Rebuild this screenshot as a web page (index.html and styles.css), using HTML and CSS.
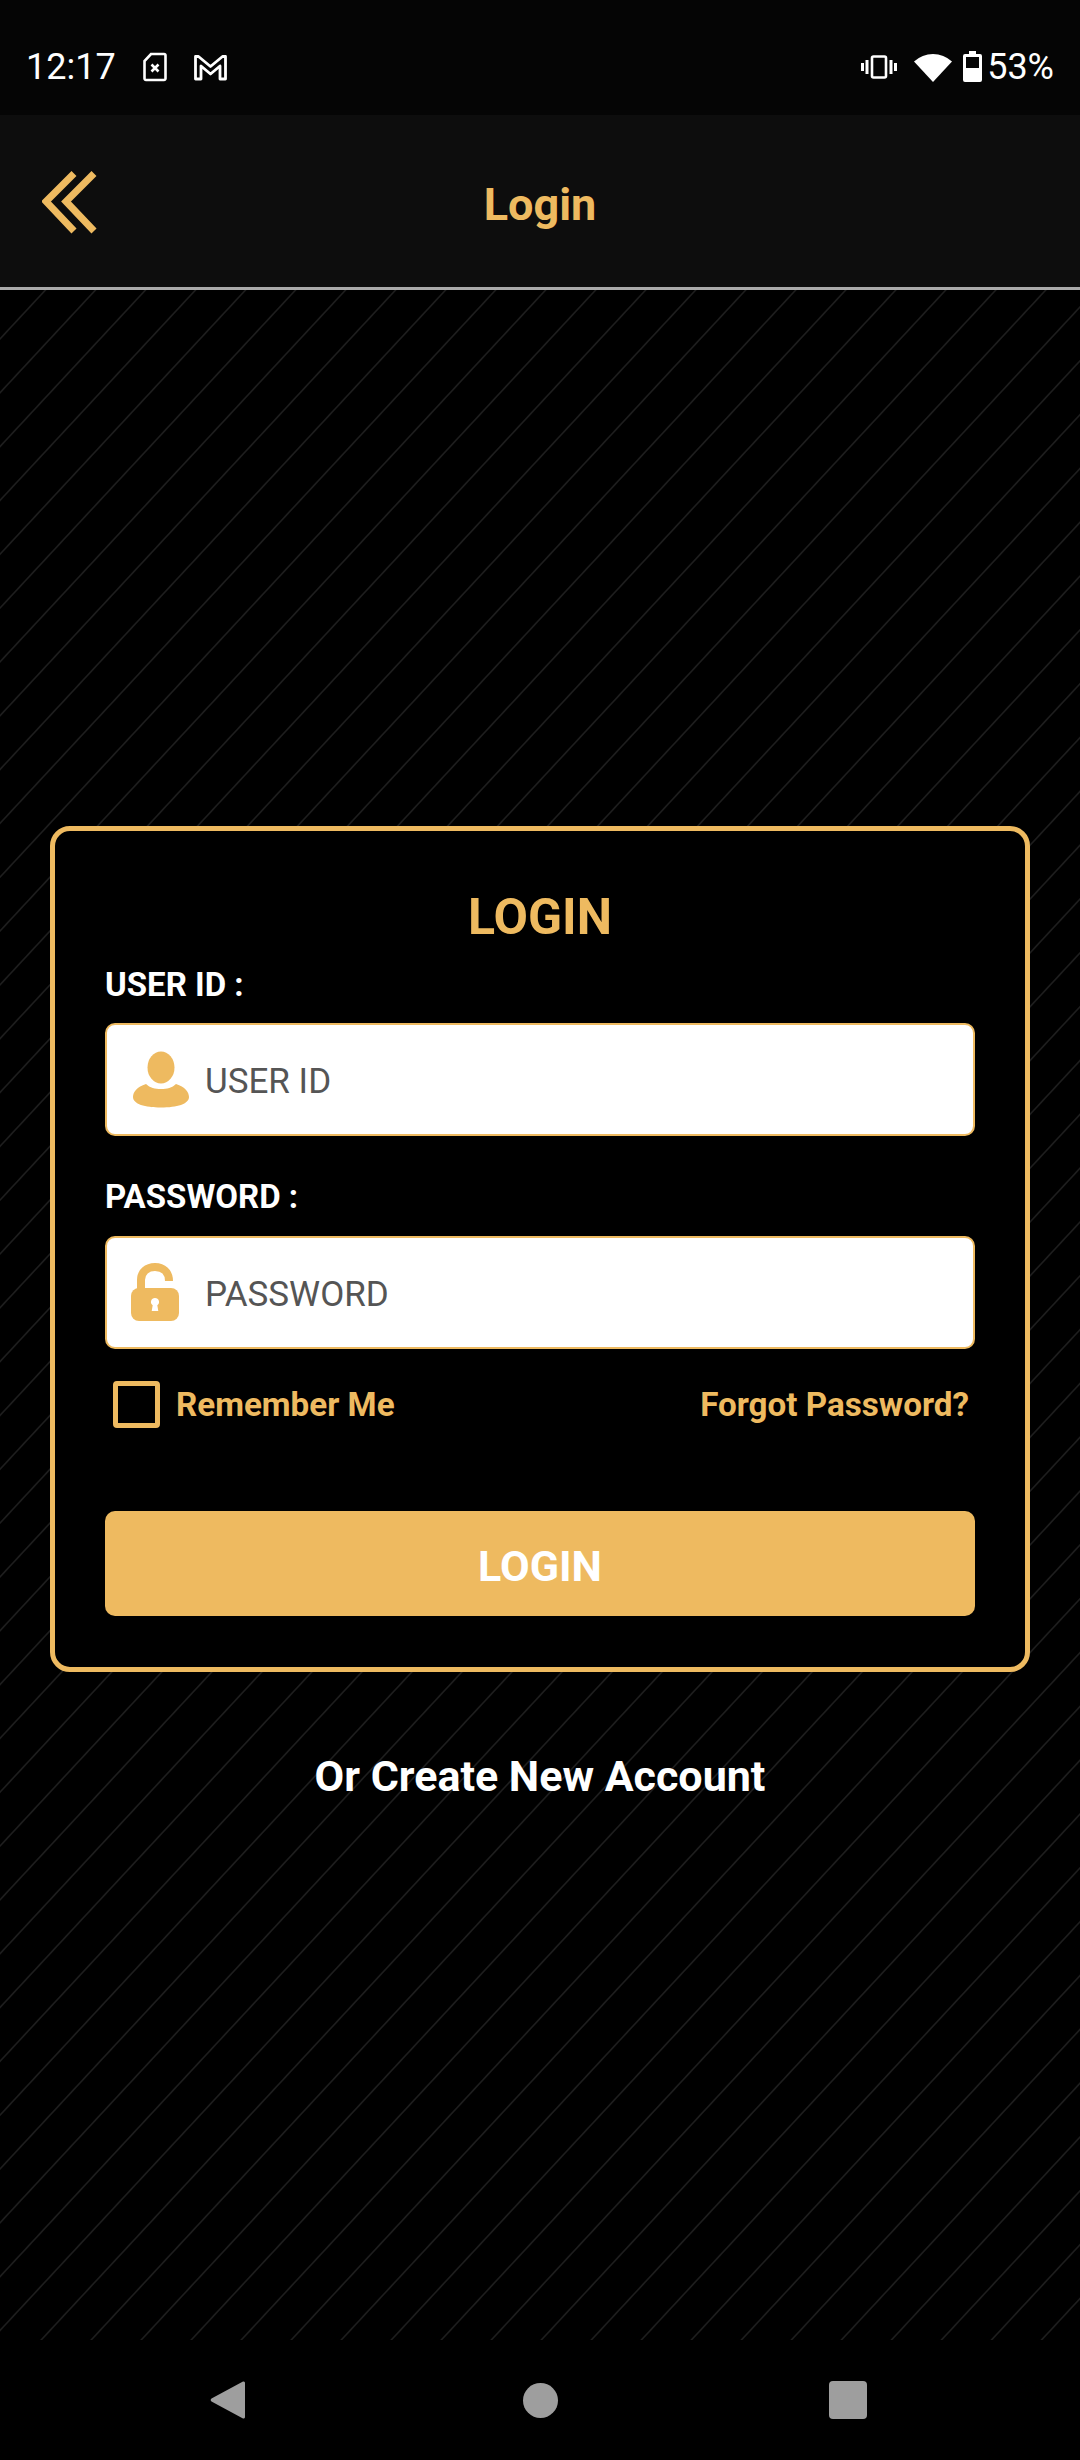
FILE: index.html
```html
<!DOCTYPE html>
<html lang="en">
<head>
    <meta charset="UTF-8">
    <meta name="viewport" content="width=device-width, initial-scale=1.0">
    <title>Login</title>
    <link rel="stylesheet" href="styles.css">
</head>
<body>

<div class="status-bar">
    <span class="status-time">12:17</span>
    <svg class="icon-sim" viewBox="0 0 24 30"><path d="M8 2h13a1.500 1.500 0 0 1 1.500 1.500v23a1.500 1.500 0 0 1-1.500 1.500h-18a1.500 1.500 0 0 1-1.500-1.500v-17.500z" fill="none" stroke="#fff" stroke-width="2.600"/><path d="M8.500 12.500l7 7m0-7l-7 7" stroke="#fff" stroke-width="2.600"/></svg>
    <svg class="icon-gmail" viewBox="0 0 34 28"><path d="M2 26v-22.500h3l12 10 12-10h3v22.500h-5.500v-13l-9.500 8-9.500-8v13z" fill="none" stroke="#fff" stroke-width="2.800" stroke-linejoin="round"/></svg>
    <div class="status-right">
        <svg class="icon-vibrate" viewBox="0 0 36 24"><rect x="11" y="1.500" width="14" height="21" rx="1.500" fill="none" stroke="#fff" stroke-width="2.600"/><path d="M6 5v14M1.500 8v8M30 5v14M34.500 8v8" stroke="#fff" stroke-width="3"/></svg>
        <svg class="icon-wifi" viewBox="0 0 38 31"><path d="M0 10.500a28 28 0 0 1 38 0l-19 20.500z" fill="#fff"/></svg>
        <svg class="icon-battery" viewBox="0 0 19 31"><path d="M6 0h7v3h4a2 2 0 0 1 2 2v24a2 2 0 0 1-2 2h-15a2 2 0 0 1-2-2v-24a2 2 0 0 1 2-2h4z" fill="#fff"/><rect x="3" y="6" width="13" height="11" fill="#050505"/></svg>
        <span class="status-percent">53%</span>
    </div>
</div>

<div class="top-bar">
    <svg class="icon-back" viewBox="0 0 56 64"><path d="M32 3.500l-28 28 28 29.500M52 3.500l-28 28 28 29.500" fill="none" stroke="#eeba60" stroke-width="7"/></svg>
    <h1 class="top-title">Login</h1>
</div>

<div class="content">
    <form class="login-card">
        <h2 class="card-title">LOGIN</h2>

        <label class="field-label" for="user_id">USER ID :</label>
        <div class="field">
            <svg class="field-icon" viewBox="0 0 60 60"><ellipse cx="30" cy="17.500" rx="13.500" ry="16" fill="#eeba60"/><path d="M15 34c-9 3-13 8-13 13 0 7 12 10.500 28 10.500s28-3.500 28-10.500c0-5-4-10-13-13-4 4-9 5-15 5s-11-1-15-5z" fill="#eeba60"/></svg>
            <input class="field-input" type="text" id="user_id" placeholder="USER ID">
        </div>

        <label class="field-label" for="password">PASSWORD :</label>
        <div class="field">
            <svg class="field-icon" viewBox="0 0 60 60"><path d="M10 30v-13c0-8 6-13 14-13s14 5 14 14" fill="none" stroke="#eeba60" stroke-width="8"/><rect x="0" y="25" width="48" height="33" rx="8" fill="#eeba60"/><path d="M24 35a4 4 0 0 1 2.300 7.300l1 5.700h-6.600l1-5.700a4 4 0 0 1 2.300-7.300z" fill="#fff"/></svg>
            <input class="field-input" type="password" id="password" placeholder="PASSWORD">
        </div>

        <div class="options-row">
            <label class="remember"><span class="checkbox"></span>Remember Me</label>
            <a class="forgot-link">Forgot Password?</a>
        </div>

        <button class="login-btn" type="button">LOGIN</button>
    </form>

    <a class="create-link">Or Create New Account</a>
</div>

<div class="nav-bar">
    <svg class="nav-back" viewBox="0 0 36 40"><path d="M33 1.500a1.500 1.500 0 0 1 2 1.500v34a1.500 1.500 0 0 1-2 1.500l-31.500-17a2 2 0 0 1 0-3z" fill="#9e9e9e"/></svg>
    <span class="nav-home"></span>
    <span class="nav-recent"></span>
</div>

</body>
</html>
```

FILE: styles.css
```css
* {
    box-sizing: border-box;
}
body {
    font-family: Roboto, Arial, sans-serif;
    background-color: #000;
    color: #fff;
    margin: 0;
    width: 1080px;
    height: 2460px;
    display: flex;
    flex-direction: column;
    overflow: hidden;
}
.status-bar {
    height: 115px;
    flex: none;
    background-color: #050505;
    display: flex;
    align-items: center;
    padding: 18px 26px 0 26px;
}
.status-time {
    font-size: 36px;
    width: 117px;
}
.icon-sim {
    width: 24px;
    height: 30px;
}
.icon-gmail {
    width: 35px;
    height: 28px;
    margin-left: 26px;
}
.status-right {
    margin-left: auto;
    display: flex;
    align-items: center;
}
.icon-vibrate {
    width: 36px;
    height: 24px;
}
.icon-wifi {
    width: 38px;
    height: 31px;
    margin-left: 17px;
}
.icon-battery {
    width: 19px;
    height: 31px;
    margin-left: 11px;
}
.status-percent {
    font-size: 36px;
    margin-left: 5px;
}
.top-bar {
    height: 175px;
    flex: none;
    background-color: #0d0d0d;
    border-bottom: 3px solid #aaa;
    position: relative;
    display: flex;
    align-items: center;
    justify-content: center;
    padding-top: 6px;
}
.icon-back {
    position: absolute;
    left: 42px;
    top: 55px;
    width: 56px;
    height: 64px;
}
.top-title {
    margin: 0;
    font-size: 45px;
    font-weight: 700;
    color: #eeba60;
}
.content {
    flex: 1;
    display: flex;
    flex-direction: column;
    align-items: center;
    padding-top: 536px;
    background-color: #000;
    background-image: repeating-linear-gradient(132.9deg, #000 0, #000 32px, #1e1e1e 33px, #1e1e1e 33.600px, #000 34.600px, #000 36.640px);
}
.login-card {
    width: 980px;
    height: 846px;
    background-color: #000;
    border: 5px solid #eeba60;
    border-radius: 20px;
    padding: 56px 50px 0 50px;
    display: flex;
    flex-direction: column;
}
.card-title {
    margin: 0;
    font-size: 50px;
    font-weight: 700;
    line-height: 60px;
    text-align: center;
    color: #eeba60;
}
.field-label {
    display: block;
    font-size: 33px;
    font-weight: 700;
    line-height: 38px;
    margin-top: 19px;
    margin-bottom: 19px;
}
.field-label + .field + .field-label {
    margin-top: 42px;
    margin-bottom: 20px;
}
.field {
    height: 113px;
    background-color: #fff;
    border: 2px solid #eeba60;
    border-radius: 10px;
    display: flex;
    align-items: center;
    padding-left: 24px;
}
.field-icon {
    width: 60px;
    height: 60px;
    flex: none;
}
.field-input {
    flex: 1;
    min-width: 0;
    border: none;
    outline: none;
    background: transparent;
    font-family: Roboto, Arial, sans-serif;
    font-size: 35px;
    margin-left: 14px;
    padding: 3px 0 0 0;
}
.field-input::placeholder {
    color: #555;
    opacity: 1;
}
.options-row {
    display: flex;
    justify-content: space-between;
    align-items: center;
    margin-top: 32px;
    padding: 0 6px 0 8px;
    font-size: 33.200px;
    font-weight: 700;
    color: #eeba60;
}
.remember {
    display: flex;
    align-items: center;
}
.checkbox {
    width: 47px;
    height: 47px;
    border: 5px solid #eeba60;
    border-radius: 4px;
    margin-right: 16px;
}
.login-btn {
    width: 100%;
    height: 105px;
    margin-top: 83px;
    padding: 5px 0 0 0;
    border: none;
    border-radius: 10px;
    background-color: #eeba60;
    color: #fff;
    font-family: Roboto, Arial, sans-serif;
    font-size: 43px;
    font-weight: 700;
    cursor: pointer;
}
.create-link {
    margin-top: 79px;
    font-size: 43px;
    font-weight: 700;
}
.nav-bar {
    height: 120px;
    flex: none;
    background-color: #000;
    position: relative;
    display: flex;
    align-items: center;
    justify-content: center;
}
.nav-back {
    position: absolute;
    left: 210px;
    top: 40px;
    width: 36px;
    height: 40px;
}
.nav-home {
    width: 35px;
    height: 35px;
    border-radius: 50%;
    background-color: #9e9e9e;
}
.nav-recent {
    position: absolute;
    left: 829px;
    top: 41px;
    width: 38px;
    height: 38px;
    border-radius: 4px;
    background-color: #9e9e9e;
}
```
